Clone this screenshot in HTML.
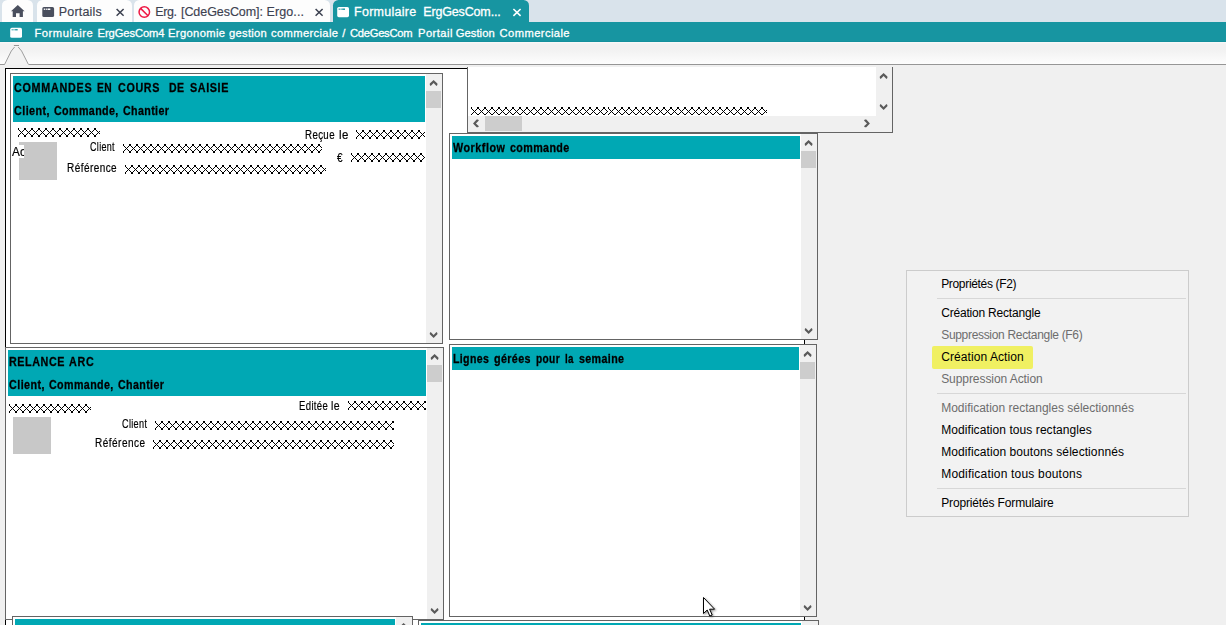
<!DOCTYPE html>
<html><head><meta charset="utf-8"><title>Formulaire ErgGesCom4</title>
<style>
html,body{margin:0;padding:0}
body{width:1226px;height:625px;overflow:hidden;position:relative;background:#f0f0f0;font-family:"Liberation Sans",sans-serif;color:#000}
.a{position:absolute;box-sizing:border-box}
.t{position:absolute;white-space:pre;line-height:1;transform-origin:0 0}
svg{position:absolute;left:0;top:0}
</style></head><body>
<div class="a " style="left:0px;top:0px;width:1226px;height:22px;background:#d9e3eb;"></div>
<div class="a " style="left:1.5px;top:0px;width:31.0px;height:23px;background:#fdfdfd;border-radius:5.5px 5.5px 0 0;"></div>
<div class="a " style="left:37.3px;top:0px;width:94.4px;height:23px;background:#fdfdfd;border-radius:5.5px 5.5px 0 0;"></div>
<div class="a " style="left:133.8px;top:0px;width:196.2px;height:23px;background:#fdfdfd;border-radius:5.5px 5.5px 0 0;"></div>
<div class="a " style="left:332.6px;top:0px;width:196.2px;height:23px;background:#1795a1;border-radius:5.5px 5.5px 0 0;"></div>
<div class="a " style="left:0px;top:22px;width:1226px;height:20px;background:#1795a1;"></div>
<div class="a " style="left:0px;top:41px;width:1226px;height:1px;background:#13909c;"></div>
<div class="a " style="left:0px;top:42px;width:1226px;height:22px;background:linear-gradient(#f9f9f9 0px,#f1f1f1 2px,#f1f1f1 7px,#fdfdfd 22px);"></div>
<div class="a " style="left:6px;top:69px;width:798px;height:556px;background:#fff;"></div>
<div class="a " style="left:5px;top:68px;width:463px;height:1px;background:#000;"></div>
<div class="a " style="left:5px;top:68px;width:1px;height:557px;background:#000;"></div>
<div class="a " style="left:804px;top:133px;width:1px;height:492px;background:#000;"></div>
<div class="a " style="left:443px;top:69px;width:24px;height:64px;background:#fff;"></div>
<div class="a " style="left:10px;top:73px;width:433px;height:271px;background:#fff;border:1px solid #646464;"></div>
<div class="a " style="left:426px;top:74px;width:16px;height:269px;background:#f0f0f0;"></div>
<div class="a " style="left:426px;top:91px;width:15px;height:17px;background:#cdcdcd;"></div>
<div class="a " style="left:13px;top:76px;width:412px;height:46px;background:#00a8b4;"></div>
<div class="a " style="left:5px;top:347px;width:439px;height:273px;background:#fff;border:1px solid #646464;"></div>
<div class="a " style="left:427px;top:348px;width:16px;height:271px;background:#f0f0f0;"></div>
<div class="a " style="left:427px;top:365px;width:15px;height:17px;background:#cdcdcd;"></div>
<div class="a " style="left:8px;top:350px;width:418px;height:46px;background:#00a8b4;"></div>
<div class="a " style="left:449px;top:133px;width:369px;height:207px;background:#fff;border:1px solid #646464;"></div>
<div class="a " style="left:801px;top:134px;width:16px;height:205px;background:#f0f0f0;"></div>
<div class="a " style="left:801px;top:151px;width:15px;height:17px;background:#cdcdcd;"></div>
<div class="a " style="left:452px;top:136px;width:348px;height:23px;background:#00a8b4;"></div>
<div class="a " style="left:449px;top:344px;width:368px;height:273px;background:#fff;border:1px solid #646464;"></div>
<div class="a " style="left:800px;top:345px;width:16px;height:271px;background:#f0f0f0;"></div>
<div class="a " style="left:800px;top:362px;width:15px;height:17px;background:#cdcdcd;"></div>
<div class="a " style="left:452px;top:347px;width:347px;height:23px;background:#00a8b4;"></div>
<div class="a " style="left:12px;top:616px;width:401px;height:10px;background:#fff;border:1px solid #646464;border-bottom:none;"></div>
<div class="a " style="left:396px;top:617px;width:16px;height:9px;background:#f0f0f0;"></div>
<div class="a " style="left:15px;top:619px;width:380px;height:7px;background:#00a8b4;"></div>
<div class="a " style="left:418px;top:620px;width:401px;height:6px;background:#fff;border:1px solid #646464;border-bottom:none;"></div>
<div class="a " style="left:802px;top:621px;width:16px;height:5px;background:#f0f0f0;"></div>
<div class="a " style="left:421px;top:623px;width:380px;height:3px;background:#00a8b4;"></div>
<div class="a " style="left:467px;top:67px;width:426px;height:66px;background:#fff;border:1px solid #646464;border-top:none;"></div>
<div class="a " style="left:876px;top:67px;width:16px;height:49px;background:#f0f0f0;"></div>
<div class="a " style="left:468px;top:116px;width:424px;height:16px;background:#f0f0f0;"></div>
<div class="a " style="left:485px;top:116px;width:37px;height:15px;background:#cdcdcd;"></div>
<div class="a " style="left:19px;top:142px;width:38px;height:38px;background:#c8c8c8;"></div>
<div class="a" style="left:11px;top:145px;width:13px;height:13px;background:#fff;overflow:hidden"><span class="t" style="left:0.5px;top:1.4px;font-size:12.5px;transform:scaleX(0.94);letter-spacing:0.3px;-webkit-text-stroke:0.2px #000">Action</span></div>
<div class="a " style="left:13px;top:417px;width:38px;height:37px;background:#c8c8c8;"></div>
<div class="a " style="left:906px;top:270px;width:283px;height:247px;background:#f2f2f2;border:1px solid #cccccc;"></div>
<div class="a " style="left:937px;top:298px;width:249px;height:1px;background:#d7d7d7;"></div>
<div class="a " style="left:937px;top:393px;width:249px;height:1px;background:#d7d7d7;"></div>
<div class="a " style="left:937px;top:488px;width:249px;height:1px;background:#d7d7d7;"></div>
<div class="a " style="left:932px;top:346px;width:101px;height:23px;background:#f0f062;border-radius:2px;"></div>
<svg width="1226" height="625" viewBox="0 0 1226 625"><defs><pattern id="xp" width="7" height="9" patternUnits="userSpaceOnUse" shape-rendering="crispEdges"><rect x="0" y="0" width="1" height="1" fill="#000"/><rect x="6" y="0" width="1" height="1" fill="#000"/><rect x="0" y="1" width="1" height="1" fill="#000"/><rect x="6" y="1" width="1" height="1" fill="#000"/><rect x="1" y="2" width="1" height="1" fill="#000"/><rect x="5" y="2" width="1" height="1" fill="#000"/><rect x="2" y="3" width="1" height="1" fill="#000"/><rect x="4" y="3" width="1" height="1" fill="#000"/><rect x="3" y="4" width="1" height="1" fill="#000"/><rect x="2" y="5" width="1" height="1" fill="#000"/><rect x="4" y="5" width="1" height="1" fill="#000"/><rect x="1" y="6" width="1" height="1" fill="#000"/><rect x="5" y="6" width="1" height="1" fill="#000"/><rect x="0" y="7" width="1" height="1" fill="#000"/><rect x="6" y="7" width="1" height="1" fill="#000"/><rect x="0" y="8" width="1" height="1" fill="#000"/><rect x="6" y="8" width="1" height="1" fill="#000"/></pattern></defs>

<path d="M17.8 4.9 L24.6 11.2 L22.9 11.2 L22.9 16.9 L19.6 16.9 L19.6 13.2 L16 13.2 L16 16.9 L12.7 16.9 L12.7 11.2 L11 11.2 Z" fill="#4a4f5e"/>
<rect x="42.3" y="7.1" width="11.8" height="10" rx="1.6" fill="#4a4f5e"/>
<rect x="43.8" y="8.5" width="1.1" height="1.5" fill="#fff"/><rect x="45.7" y="8.5" width="1.1" height="1.5" fill="#fff"/><rect x="47.5" y="8.5" width="2.8" height="1.5" fill="#fff"/>
<path d="M116.6 9 L123.6 15.8 M123.6 9 L116.6 15.8" stroke="#3c4150" stroke-width="1.5" fill="none"/>
<circle cx="144.3" cy="12.1" r="5.25" stroke="#ee1a45" stroke-width="1.5" fill="none"/>
<path d="M140.6 8.4 L148 15.8" stroke="#ee1a45" stroke-width="1.5"/>
<path d="M315.6 9 L322.6 15.8 M322.6 9 L315.6 15.8" stroke="#3c4150" stroke-width="1.5" fill="none"/>
<rect x="337.2" y="7" width="11.8" height="10.2" rx="1.6" fill="#fff"/>
<rect x="338.7" y="8.5" width="1" height="1.4" fill="#1795a1"/><rect x="340.6" y="8.5" width="1" height="1.4" fill="#1795a1"/><rect x="342.2" y="8.5" width="2.8" height="1.4" fill="#1795a1"/>
<path d="M513.4 9 L520.6 15.8 M520.6 9 L513.4 15.8" stroke="#fff" stroke-width="1.6" fill="none"/>
<rect x="10.2" y="27.8" width="11.8" height="10" rx="1.6" fill="#fff"/>
<rect x="11.7" y="29.1" width="1" height="1.3" fill="#1795a1"/><rect x="13.5" y="29.1" width="1" height="1.3" fill="#1795a1"/><rect x="15.1" y="29.1" width="2.6" height="1.3" fill="#1795a1"/>
<path d="M5 64.5 L11.3 51 L14.5 47 L18.3 47 L21.6 51 L28.2 64.5 Z" fill="#f2f2f2"/>
<path d="M0 64.5 L4.8 64.5 M28.4 64.5 L1226 64.5 M13.9 45.5 L19 45.5" stroke="#969696" stroke-width="1" fill="none"/>
<path d="M4.8 64 L11.3 51 L14.6 47 M18.2 47 L21.6 51 L28.2 64" stroke="#9e9e9e" stroke-width="1" fill="none"/>

<polygon points="433.60,80.00 429.80,83.60 429.80,85.00 430.70,85.90 433.60,82.90 436.50,85.90 437.40,85.00 437.40,83.60" fill="#5a5a5a"/>
<polygon points="433.60,337.90 429.80,334.30 429.80,332.90 430.70,332.00 433.60,335.00 436.50,332.00 437.40,332.90 437.40,334.30" fill="#5a5a5a"/>
<polygon points="434.60,354.00 430.80,357.60 430.80,359.00 431.70,359.90 434.60,356.90 437.50,359.90 438.40,359.00 438.40,357.60" fill="#5a5a5a"/>
<polygon points="434.60,613.90 430.80,610.30 430.80,608.90 431.70,608.00 434.60,611.00 437.50,608.00 438.40,608.90 438.40,610.30" fill="#5a5a5a"/>
<polygon points="808.60,140.00 804.80,143.60 804.80,145.00 805.70,145.90 808.60,142.90 811.50,145.90 812.40,145.00 812.40,143.60" fill="#5a5a5a"/>
<polygon points="808.60,333.90 804.80,330.30 804.80,328.90 805.70,328.00 808.60,331.00 811.50,328.00 812.40,328.90 812.40,330.30" fill="#5a5a5a"/>
<polygon points="807.60,351.00 803.80,354.60 803.80,356.00 804.70,356.90 807.60,353.90 810.50,356.90 811.40,356.00 811.40,354.60" fill="#5a5a5a"/>
<polygon points="807.60,610.90 803.80,607.30 803.80,605.90 804.70,605.00 807.60,608.00 810.50,605.00 811.40,605.90 811.40,607.30" fill="#5a5a5a"/>
<polygon points="403.60,623.00 399.80,626.60 399.80,628.00 400.70,628.90 403.60,625.90 406.50,628.90 407.40,628.00 407.40,626.60" fill="#5a5a5a"/>
<polygon points="809.60,627.00 805.80,630.60 805.80,632.00 806.70,632.90 809.60,629.90 812.50,632.90 813.40,632.00 813.40,630.60" fill="#5a5a5a"/>
<polygon points="883.60,73.00 879.80,76.60 879.80,78.00 880.70,78.90 883.60,75.90 886.50,78.90 887.40,78.00 887.40,76.60" fill="#5a5a5a"/>
<polygon points="883.60,109.90 879.80,106.30 879.80,104.90 880.70,104.00 883.60,107.00 886.50,104.00 887.40,104.90 887.40,106.30" fill="#5a5a5a"/>
<polygon points="473.00,123.40 476.60,119.60 478.00,119.60 478.90,120.50 475.90,123.40 478.90,126.30 478.00,127.20 476.60,127.20" fill="#5a5a5a"/>
<polygon points="869.90,123.40 866.30,119.60 864.90,119.60 864.00,120.50 867.00,123.40 864.00,126.30 864.90,127.20 866.30,127.20" fill="#5a5a5a"/>
<g transform="translate(18,128)"><rect width="82" height="9" fill="url(#xp)"/></g>
<g transform="translate(356,130)"><rect width="69" height="9" fill="url(#xp)"/></g>
<g transform="translate(123,144)"><rect width="199" height="9" fill="url(#xp)"/></g>
<g transform="translate(351,153)"><rect width="74" height="9" fill="url(#xp)"/></g>
<g transform="translate(125,165)"><rect width="201" height="9" fill="url(#xp)"/></g>
<g transform="translate(9,404)"><rect width="82" height="9" fill="url(#xp)"/></g>
<g transform="translate(348,401)"><rect width="78" height="9" fill="url(#xp)"/></g>
<g transform="translate(155,421)"><rect width="239" height="9" fill="url(#xp)"/></g>
<g transform="translate(153,440)"><rect width="241" height="9" fill="url(#xp)"/></g>
<g transform="translate(471,107)"><rect width="137" height="8" fill="url(#xp)"/></g>
<g transform="translate(608,107)"><rect width="159" height="8" fill="url(#xp)"/></g>
<path d="M703.5 597.5 L703.5 613.5 L707.2 610 L709.8 616 L712.2 615 L709.6 609.2 L714.6 609.2 Z" fill="#fff" stroke="#000" stroke-width="1" stroke-linejoin="miter" style="filter:drop-shadow(1px 1px 0.8px rgba(0,0,0,.45))"/>
</svg>
<span class="t" style="left:58.80px;top:6.42px;font-size:12.5px;color:#3c4150;-webkit-text-stroke:0.15px #3c4150;letter-spacing:0.181px;">Portails</span>
<span class="t" style="left:155.20px;top:6.42px;font-size:12.5px;color:#3c4150;-webkit-text-stroke:0.15px #3c4150;letter-spacing:-0.384px;">Erg.</span>
<span class="t" style="left:181.00px;top:6.42px;font-size:12.5px;color:#3c4150;-webkit-text-stroke:0.15px #3c4150;letter-spacing:-0.063px;">[CdeGesCom]:</span>
<span class="t" style="left:266.50px;top:6.42px;font-size:12.5px;color:#3c4150;-webkit-text-stroke:0.15px #3c4150;letter-spacing:0.108px;">Ergo...</span>
<span class="t" style="left:354.00px;top:6.42px;font-size:12.5px;color:#fff;-webkit-text-stroke:0.3px #fff;letter-spacing:0.280px;">Formulaire</span>
<span class="t" style="left:423.20px;top:6.42px;font-size:12.5px;color:#fff;-webkit-text-stroke:0.3px #fff;letter-spacing:-0.147px;">ErgGesCom...</span>
<span class="t" style="left:34.40px;top:28.02px;font-size:11.2px;color:#fff;-webkit-text-stroke:0.3px #fff;letter-spacing:0.551px;">Formulaire</span>
<span class="t" style="left:97.60px;top:28.02px;font-size:11.2px;color:#fff;-webkit-text-stroke:0.3px #fff;letter-spacing:-0.094px;">ErgGesCom4</span>
<span class="t" style="left:168.00px;top:28.02px;font-size:11.2px;color:#fff;-webkit-text-stroke:0.3px #fff;letter-spacing:0.365px;">Ergonomie</span>
<span class="t" style="left:229.00px;top:28.02px;font-size:11.2px;color:#fff;-webkit-text-stroke:0.3px #fff;letter-spacing:0.291px;">gestion</span>
<span class="t" style="left:271.00px;top:28.02px;font-size:11.2px;color:#fff;-webkit-text-stroke:0.3px #fff;letter-spacing:0.361px;">commerciale</span>
<span class="t" style="left:342.20px;top:28.02px;font-size:11.2px;color:#fff;-webkit-text-stroke:0.3px #fff;">/</span>
<span class="t" style="left:350.00px;top:28.02px;font-size:11.2px;color:#fff;-webkit-text-stroke:0.3px #fff;letter-spacing:-0.268px;">CdeGesCom</span>
<span class="t" style="left:418.00px;top:28.02px;font-size:11.2px;color:#fff;-webkit-text-stroke:0.3px #fff;letter-spacing:0.446px;">Portail</span>
<span class="t" style="left:455.80px;top:28.02px;font-size:11.2px;color:#fff;-webkit-text-stroke:0.3px #fff;letter-spacing:0.044px;">Gestion</span>
<span class="t" style="left:499.60px;top:28.02px;font-size:11.2px;color:#fff;-webkit-text-stroke:0.3px #fff;letter-spacing:0.403px;">Commerciale</span>
<span class="t" style="left:13.90px;top:82.42px;font-size:12.5px;transform:scaleX(0.8600);font-weight:bold;-webkit-text-stroke:0.3px #000;letter-spacing:0.861px;">COMMANDES</span>
<span class="t" style="left:97.00px;top:82.42px;font-size:12.5px;transform:scaleX(0.8208);font-weight:bold;-webkit-text-stroke:0.3px #000;letter-spacing:0.450px;">EN</span>
<span class="t" style="left:117.90px;top:82.42px;font-size:12.5px;transform:scaleX(0.8600);font-weight:bold;-webkit-text-stroke:0.3px #000;letter-spacing:0.747px;">COURS</span>
<span class="t" style="left:168.80px;top:82.42px;font-size:12.5px;transform:scaleX(0.8411);font-weight:bold;-webkit-text-stroke:0.3px #000;letter-spacing:0.450px;">DE</span>
<span class="t" style="left:189.80px;top:82.42px;font-size:12.5px;transform:scaleX(0.8600);font-weight:bold;-webkit-text-stroke:0.3px #000;letter-spacing:0.731px;">SAISIE</span>
<span class="t" style="left:13.90px;top:105.42px;font-size:12.5px;transform:scaleX(0.8600);font-weight:bold;-webkit-text-stroke:0.3px #000;letter-spacing:0.535px;">Client,</span>
<span class="t" style="left:54.00px;top:105.42px;font-size:12.5px;transform:scaleX(0.8558);font-weight:bold;-webkit-text-stroke:0.3px #000;letter-spacing:0.450px;">Commande,</span>
<span class="t" style="left:122.50px;top:105.42px;font-size:12.5px;transform:scaleX(0.8521);font-weight:bold;-webkit-text-stroke:0.3px #000;letter-spacing:0.450px;">Chantier</span>
<span class="t" style="left:8.90px;top:356.42px;font-size:12.5px;transform:scaleX(0.8600);font-weight:bold;-webkit-text-stroke:0.3px #000;letter-spacing:0.665px;">RELANCE</span>
<span class="t" style="left:69.20px;top:356.42px;font-size:12.5px;transform:scaleX(0.8600);font-weight:bold;-webkit-text-stroke:0.3px #000;letter-spacing:0.892px;">ARC</span>
<span class="t" style="left:8.90px;top:379.42px;font-size:12.5px;transform:scaleX(0.8600);font-weight:bold;-webkit-text-stroke:0.3px #000;letter-spacing:0.535px;">Client,</span>
<span class="t" style="left:49.00px;top:379.42px;font-size:12.5px;transform:scaleX(0.8558);font-weight:bold;-webkit-text-stroke:0.3px #000;letter-spacing:0.450px;">Commande,</span>
<span class="t" style="left:117.50px;top:379.42px;font-size:12.5px;transform:scaleX(0.8521);font-weight:bold;-webkit-text-stroke:0.3px #000;letter-spacing:0.450px;">Chantier</span>
<span class="t" style="left:452.80px;top:142.42px;font-size:12.5px;transform:scaleX(0.8600);font-weight:bold;-webkit-text-stroke:0.3px #000;letter-spacing:0.629px;">Workflow</span>
<span class="t" style="left:510.00px;top:142.42px;font-size:12.5px;transform:scaleX(0.8571);font-weight:bold;-webkit-text-stroke:0.3px #000;letter-spacing:0.450px;">commande</span>
<span class="t" style="left:452.80px;top:353.42px;font-size:12.5px;transform:scaleX(0.8431);font-weight:bold;-webkit-text-stroke:0.3px #000;letter-spacing:0.450px;">Lignes</span>
<span class="t" style="left:494.00px;top:353.42px;font-size:12.5px;transform:scaleX(0.8590);font-weight:bold;-webkit-text-stroke:0.3px #000;letter-spacing:0.450px;">gérées</span>
<span class="t" style="left:535.50px;top:353.42px;font-size:12.5px;transform:scaleX(0.8101);font-weight:bold;-webkit-text-stroke:0.3px #000;letter-spacing:0.450px;">pour</span>
<span class="t" style="left:564.60px;top:353.42px;font-size:12.5px;transform:scaleX(0.7800);font-weight:bold;-webkit-text-stroke:0.3px #000;letter-spacing:0.450px;">la</span>
<span class="t" style="left:579.00px;top:353.42px;font-size:12.5px;transform:scaleX(0.8526);font-weight:bold;-webkit-text-stroke:0.3px #000;letter-spacing:0.450px;">semaine</span>
<span class="t" style="left:304.92px;top:129.42px;font-size:12.5px;transform:scaleX(0.7788);-webkit-text-stroke:0.2px #000;letter-spacing:0.450px;">Reçue</span>
<span class="t" style="left:338.60px;top:129.42px;font-size:12.5px;transform:scaleX(0.9191);-webkit-text-stroke:0.2px #000;letter-spacing:0.450px;">le</span>
<span class="t" style="left:90.00px;top:141.42px;font-size:12.5px;transform:scaleX(0.7197);-webkit-text-stroke:0.2px #000;letter-spacing:0.450px;">Client</span>
<span class="t" style="left:337.00px;top:152.42px;font-size:12.5px;transform:scaleX(0.8000);-webkit-text-stroke:0.2px #000;">€</span>
<span class="t" style="left:67.20px;top:162.42px;font-size:12.5px;transform:scaleX(0.8000);-webkit-text-stroke:0.2px #000;letter-spacing:0.551px;">Référence</span>
<span class="t" style="left:298.64px;top:400.42px;font-size:12.5px;transform:scaleX(0.7648);-webkit-text-stroke:0.2px #000;letter-spacing:0.450px;">Editée</span>
<span class="t" style="left:331.20px;top:400.42px;font-size:12.5px;transform:scaleX(0.8409);-webkit-text-stroke:0.2px #000;letter-spacing:0.450px;">le</span>
<span class="t" style="left:121.60px;top:418.42px;font-size:12.5px;transform:scaleX(0.7284);-webkit-text-stroke:0.2px #000;letter-spacing:0.450px;">Client</span>
<span class="t" style="left:94.90px;top:437.42px;font-size:12.5px;transform:scaleX(0.8000);-webkit-text-stroke:0.2px #000;letter-spacing:0.613px;">Référence</span>
<span class="t" style="left:941.20px;top:277.84px;font-size:12px;letter-spacing:-0.330px;">Propriétés (F2)</span>
<span class="t" style="left:941.20px;top:306.84px;font-size:12px;letter-spacing:-0.197px;">Création Rectangle</span>
<span class="t" style="left:941.20px;top:328.84px;font-size:12px;color:#6d6d6d;letter-spacing:-0.316px;">Suppression Rectangle (F6)</span>
<span class="t" style="left:941.20px;top:350.84px;font-size:12px;letter-spacing:0.081px;">Création Action</span>
<span class="t" style="left:941.20px;top:372.84px;font-size:12px;color:#6d6d6d;letter-spacing:-0.072px;">Suppression Action</span>
<span class="t" style="left:941.20px;top:401.84px;font-size:12px;color:#6d6d6d;">Modification rectangles sélectionnés</span>
<span class="t" style="left:941.20px;top:423.84px;font-size:12px;letter-spacing:0.069px;">Modification tous rectangles</span>
<span class="t" style="left:941.20px;top:445.84px;font-size:12px;letter-spacing:0.081px;">Modification boutons sélectionnés</span>
<span class="t" style="left:941.20px;top:467.84px;font-size:12px;letter-spacing:0.192px;">Modification tous boutons</span>
<span class="t" style="left:941.20px;top:496.84px;font-size:12px;letter-spacing:-0.145px;">Propriétés Formulaire</span>
</body></html>
